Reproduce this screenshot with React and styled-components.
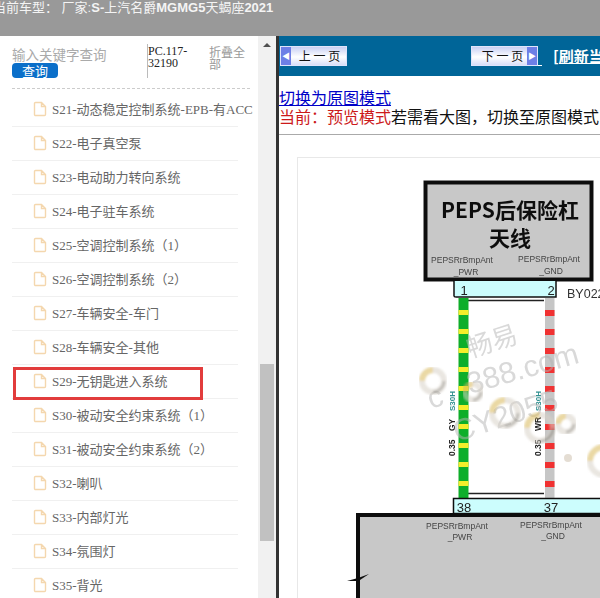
import React from "react";
import styled, { createGlobalStyle } from "styled-components";

const GlobalStyle = createGlobalStyle`
  html, body {
    margin: 0;
    padding: 0;
    background: #fff;
    overflow: hidden;
  }
`;

const Page = styled.div`
  width: 600px;
  height: 598px;
  display: flex;
  flex-direction: column;
  overflow: hidden;
  font-family: "Liberation Serif", "Noto Sans CJK SC", serif;
`;

const TopBar = styled.div`
  height: 36px;
  flex: none;
  background: #999999;
  color: #f4f4f4;
  font: 13px/16px "Liberation Sans", "Noto Sans CJK SC", sans-serif;
  white-space: nowrap;
  overflow: hidden;
`;

const CarName = styled.div`
  margin-left: -7px;
`;

const Latin = styled.b`
  font-weight: 700;
`;

const Main = styled.div`
  flex: 1;
  display: flex;
  min-height: 0;
`;

const Side = styled.div`
  width: 258px;
  flex: none;
  display: flex;
  flex-direction: column;
  overflow: hidden;
`;

const SearchBar = styled.div`
  height: 53px;
  flex: none;
  margin: 0 8px 0 12px;
  display: flex;
  border-bottom: 1px dashed #ccc;
  padding-top: 8px;
  box-sizing: border-box;
`;

const SearchBox = styled.div`
  width: 135px;
  flex: none;
  display: flex;
  flex-direction: column;
  align-items: flex-start;
`;

const Placeholder = styled.div`
  margin: 2px 0 1px;
  color: #aaaaaa;
  font: 13.5px/16px "Noto Sans CJK SC", sans-serif;
`;

const SearchButton = styled.div`
  width: 46px;
  height: 15px;
  background: #0b6fc9;
  border-radius: 4px;
  color: #fff;
  text-align: center;
  font: 13px/15px "Noto Sans CJK SC", sans-serif;
`;

const PartNo = styled.div`
  width: 62px;
  height: 34px;
  flex: none;
  box-sizing: border-box;
  border-left: 1px solid #bbb;
  padding-top: 1px;
  font-size: 12px;
  line-height: 12px;
  color: #222;
`;

const Collapse = styled.div`
  width: 37px;
  margin-top: 2px;
  color: #999;
  font: 12px/12px "Noto Sans CJK SC", sans-serif;
`;

const TreeList = styled.ul`
  list-style: none;
  margin: 4px 0 0 12px;
  padding: 0;
  width: 246px;
`;

const Row = styled.li`
  position: relative;
  width: 226px;
  height: 34px;
  box-sizing: border-box;
  border-bottom: 1px solid #f0f0f0;
  display: flex;
  align-items: center;
  padding: 0 0 2px 21px;
  white-space: nowrap;
  color: #666;
  font-size: 13px;

  ${(p) =>
    p.$marked &&
    `
    &::after {
      content: "";
      position: absolute;
      left: 1px;
      top: 2px;
      width: 190px;
      height: 33px;
      box-sizing: border-box;
      border: 3px solid #e23c3c;
    }
  `}
`;

const RowLabel = styled.span`
  margin-left: 5px;
`;

const IconSvg = styled.svg`
  flex: none;
`;

const FileIcon = () => (
  <IconSvg width="14" height="16" viewBox="0 0 14 16" fill="none">
    <path
      d="M1.5 2.5 a1 1 0 0 1 1-1 H8.5 L12.5 5.5 V13.5 a1 1 0 0 1-1 1 H2.5 a1 1 0 0 1-1-1 Z M8.5 1.5 V5.5 H12.5"
      stroke="#f4d7ae"
      strokeWidth="1.4"
    />
  </IconSvg>
);

const ScrollTrack = styled.div`
  width: 18px;
  flex: none;
  background: #f1f1f1;
  display: flex;
  flex-direction: column;
  align-items: center;
`;

const ScrollArrow = styled.div`
  margin-top: 7px;
  width: 0;
  height: 0;
  border-left: 4px solid transparent;
  border-right: 4px solid transparent;
  border-bottom: 4px solid #505050;
`;

const ScrollThumb = styled.div`
  margin-top: 317px;
  width: 14px;
  height: 177px;
  background: #c1c1c1;
`;

const Splitter = styled.div`
  width: 3px;
  flex: none;
  background: #333;
`;

const Content = styled.div`
  flex: 1;
  min-width: 0;
  display: flex;
  flex-direction: column;
  overflow: hidden;
`;

const PagerBar = styled.div`
  height: 40px;
  flex: none;
  background: #006598;
  display: flex;
  align-items: center;
  padding-left: 1px;
  white-space: nowrap;
`;

const PageButton = styled.div`
  width: 67px;
  height: 20px;
  flex: none;
  box-sizing: border-box;
  margin-left: ${(p) => p.$gap || 0}px;
  margin-top: -1px;
  display: flex;
  flex-direction: ${(p) => (p.$next ? "row-reverse" : "row")};
  background: linear-gradient(#c8d0f4, #ffffff 55%, #d8def8);
  border: 1px solid #dfe4fb;
  font: 12px/18px "Noto Sans CJK SC", sans-serif;
  color: #111;
`;

const ButtonCap = styled.span`
  width: 10px;
  flex: none;
  background: #6d7fe6;
  color: #fff;
  font-size: 8px;
  line-height: 18px;
  text-align: center;
`;

const ButtonText = styled.span`
  flex: 1;
  text-align: center;
  padding-left: ${(p) => p.$shift}px;
`;

const PagerDash = styled.span`
  width: 4px;
  height: 1px;
  margin-top: 18px;
  background: #fff;
  flex: none;
`;

const PagerLink = styled.span`
  margin-left: 11px;
  color: #fff;
  text-decoration: underline;
  font: bold 15px/18px "Noto Sans CJK SC", sans-serif;
`;

const Notice = styled.div`
  height: 46px;
  flex: none;
  padding-top: 12px;
  font: 16px/19px "Noto Sans CJK SC", sans-serif;
  white-space: nowrap;
  border-bottom: 1px solid #aaa;
  color: #111;
`;

const ModeLink = styled.a`
  color: #0000c8;
  text-decoration: underline;
`;

const ModeNow = styled.span`
  color: #cc1a1a;
`;

const Sheet = styled.div`
  margin: 22px 0 0 18px;
  border: 1px solid #e8e8e8;
  border-right: 0;
  border-bottom: 0;
  flex: 1;
`;

const chapters = [
  "S21-动态稳定控制系统-EPB-有ACC",
  "S22-电子真空泵",
  "S23-电动助力转向系统",
  "S24-电子驻车系统",
  "S25-空调控制系统（1）",
  "S26-空调控制系统（2）",
  "S27-车辆安全-车门",
  "S28-车辆安全-其他",
  "S29-无钥匙进入系统",
  "S30-被动安全约束系统（1）",
  "S31-被动安全约束系统（2）",
  "S32-喇叭",
  "S33-内部灯光",
  "S34-氛围灯",
  "S35-背光",
];

const stripes = Array.from({ length: 10 }, (_, i) => 310 + i * 19);

const Ring = ({ x, y, r }) => (
  <g fill="none" opacity="0.55" filter="url(#smear)">
    <circle cx={x} cy={y} r={r} stroke="#d8d2c8" strokeWidth="6" />
    <path d={`M${x - r} ${y} a${r} ${r} 0 0 1 ${r} ${-r}`} stroke="#d9b95a" strokeWidth="6" />
    <path d={`M${x} ${y + r} a${r} ${r} 0 0 0 ${r} ${-r}`} stroke="#8f8a80" strokeWidth="3" />
  </g>
);

const Diagram = () => (
  <svg width="302" height="440" viewBox="298 158 302 440" style={{ display: "block" }}>
    <defs>
      <filter id="soft">
        <feGaussianBlur stdDeviation="0.35" />
      </filter>
      <filter id="smear">
        <feGaussianBlur stdDeviation="1" />
      </filter>
    </defs>
    <g filter="url(#soft)" fontFamily="'Liberation Sans', 'Noto Sans CJK SC', sans-serif">
      {/* connector top */}
      <rect x="425.5" y="182.5" width="166" height="97" fill="#c8c8c8" stroke="#111" strokeWidth="4" />
      <text x="510" y="218" textAnchor="middle" fontSize="21" fontWeight="700" fill="#111" fontFamily="'Noto Sans CJK SC', sans-serif">PEPS后保险杠</text>
      <text x="510" y="246" textAnchor="middle" fontSize="21" fontWeight="700" fill="#111" fontFamily="'Noto Sans CJK SC', sans-serif">天线</text>
      <text x="462" y="263" textAnchor="middle" fontSize="8.5" fill="#444">PEPSRrBmpAnt</text>
      <text x="466" y="275" textAnchor="middle" fontSize="8.5" fill="#444">_PWR</text>
      <text x="549" y="262" textAnchor="middle" fontSize="8.5" fill="#444">PEPSRrBmpAnt</text>
      <text x="551" y="274" textAnchor="middle" fontSize="8.5" fill="#444">_GND</text>
      <path d="M454 281 V296 Q454 297 456 297 H556 V281" fill="#ccfdfd" stroke="#111" strokeWidth="1.5" />
      <text x="464" y="295" textAnchor="middle" fontSize="13" fill="#222">1</text>
      <text x="551" y="295" textAnchor="middle" fontSize="13" fill="#222">2</text>
      <text x="567" y="298" fontSize="12.5" fill="#333">BY022</text>

      {/* wires */}
      <path d="M468 300.5 H544 M468 493.5 H544" stroke="#222" strokeWidth="1.5" />
      <rect x="458.5" y="298" width="10" height="200" fill="#0fae2a" />
      <rect x="545" y="298" width="9.5" height="200" fill="#c6c6c6" />
      {stripes.map((y) => (
        <g key={y}>
          <rect x="458.5" y={y} width="10" height="5" fill="#f4ee2a" />
          <rect x="545" y={y} width="9.5" height="6" fill="#f03232" />
        </g>
      ))}
      <text transform="translate(455 411) rotate(-90)" fontSize="8" fontWeight="700" fill="#2f8f8f">S30H</text>
      <text transform="translate(455 431) rotate(-90)" fontSize="8.5" fontWeight="700" fill="#222">GY</text>
      <text transform="translate(455 456) rotate(-90)" fontSize="8.5" fontWeight="700" fill="#222">0.35</text>
      <text transform="translate(541 411) rotate(-90)" fontSize="8" fontWeight="700" fill="#2f8f8f">S30H</text>
      <text transform="translate(541 431) rotate(-90)" fontSize="8.5" fontWeight="700" fill="#222">WR</text>
      <text transform="translate(541 456) rotate(-90)" fontSize="8.5" fontWeight="700" fill="#222">0.35</text>

      {/* watermark */}
      <g opacity="0.5" fill="#b4b4b4">
        <text transform="translate(470 358) rotate(-18)" fontSize="26">畅易</text>
        <text transform="translate(470 394) rotate(-16)" fontSize="30">388.com</text>
        <text transform="translate(457 442) rotate(-18)" fontSize="30">CY2055</text>
        <text transform="translate(431 409) rotate(-18)" fontSize="30">c</text>
      </g>
      <Ring x={433} y={381} r={11} />
      <Ring x={473} y={392} r={8} />
      <Ring x={505} y={413} r={13} />
      <Ring x={540} y={428} r={13} />
      <Ring x={566} y={424} r={8} />
      <Ring x={604} y={461} r={14} />
      <circle cx="568" cy="458" r="4" fill="#d8cfc0" opacity="0.7" />

      {/* connector bottom */}
      <rect x="453.5" y="498.5" width="150" height="15" fill="#ccfdfd" stroke="#111" strokeWidth="1.5" />
      <text x="464" y="512" textAnchor="middle" fontSize="13" fill="#222">38</text>
      <text x="551" y="512" textAnchor="middle" fontSize="13" fill="#222">37</text>
      <rect x="358" y="515" width="250" height="100" fill="#c8c8c8" stroke="#111" strokeWidth="4" />
      <path d="M347 581 L358 578 L369 574 L360 580 L358 586 L356 581 Z" fill="#111" />
      <text x="457" y="529" textAnchor="middle" fontSize="8.5" fill="#444">PEPSRrBmpAnt</text>
      <text x="460" y="540" textAnchor="middle" fontSize="8.5" fill="#444">_PWR</text>
      <text x="551" y="528" textAnchor="middle" fontSize="8.5" fill="#444">PEPSRrBmpAnt</text>
      <text x="553" y="539" textAnchor="middle" fontSize="8.5" fill="#444">_GND</text>
    </g>
  </svg>
);

const App = () => (
  <Page>
    <GlobalStyle />
    <TopBar>
      <CarName>
        当前车型： 厂家:<Latin>S-</Latin>上汽名爵<Latin>MGMG5</Latin>天蝎座<Latin>2021</Latin>
      </CarName>
    </TopBar>
    <Main>
      <Side>
        <SearchBar>
          <SearchBox>
            <Placeholder>输入关键字查询</Placeholder>
            <SearchButton>查询</SearchButton>
          </SearchBox>
          <PartNo>PC.117-32190</PartNo>
          <Collapse>折叠全部</Collapse>
        </SearchBar>
        <TreeList>
          {chapters.map((name) => (
            <Row key={name} $marked={name.startsWith("S29")}>
              <FileIcon />
              <RowLabel>{name}</RowLabel>
            </Row>
          ))}
        </TreeList>
      </Side>
      <ScrollTrack>
        <ScrollArrow />
        <ScrollThumb />
      </ScrollTrack>
      <Splitter />
      <Content>
        <PagerBar>
          <PageButton>
            <ButtonCap>◀</ButtonCap>
            <ButtonText $shift={2}>上 一 页</ButtonText>
          </PageButton>
          <PageButton $next $gap={124}>
            <ButtonCap>▶</ButtonCap>
            <ButtonText $shift={6}>下 一 页</ButtonText>
          </PageButton>
          <PagerDash />
          <PagerLink>[刷新当前页]</PagerLink>
        </PagerBar>
        <Notice>
          <ModeLink>切换为原图模式</ModeLink>
          <br />
          <ModeNow>当前：预览模式</ModeNow>若需看大图，切换至原图模式
        </Notice>
        <Sheet>
          <Diagram />
        </Sheet>
      </Content>
    </Main>
  </Page>
);

export default App;
